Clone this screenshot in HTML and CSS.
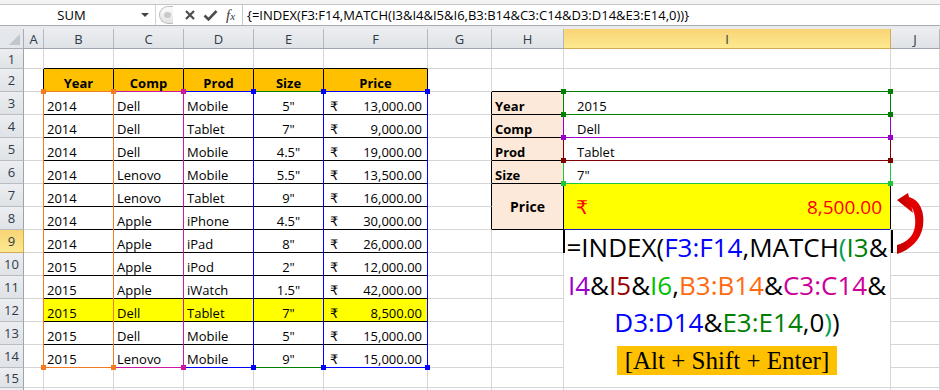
FILE: index.html
```html
<html>
  <head>
    <link rel="stylesheet" href="styles.css">
  </head>
  <body>
    <div class="top">
      <div class="fbar">
        <div class="namebox"><span class="name">SUM</span><span class="caret"></span></div>
        <div class="btns">
          <span class="grip"><span class="dot"></span></span>
          <svg class="ico-x" width="12" height="12" viewBox="0 0 12 12"><path d="M2 2 L10 10 M10 2 L2 10" stroke="#4d4d4d" stroke-width="2.2" fill="none"/></svg>
          <svg class="ico-ok" width="15" height="13" viewBox="0 0 15 13"><path d="M1.5 6.5 L5.5 10.5 L13.5 2" stroke="#4d4d4d" stroke-width="2.6" fill="none"/></svg>
          <span class="fx">f<small>x</small></span>
        </div>
        <div class="finput">{=INDEX(F3:F14,MATCH(I3&amp;I4&amp;I5&amp;I6,B3:B14&amp;C3:C14&amp;D3:D14&amp;E3:E14,0))}</div>
      </div>
      <div class="strip"></div>
    </div>

    <div class="sheet">
      <div class="grid">
        <!-- column headers -->
        <div class="corner"></div>
        <div class="ch">A</div><div class="ch">B</div><div class="ch">C</div><div class="ch">D</div><div class="ch">E</div>
        <div class="ch">F</div><div class="ch">G</div><div class="ch">H</div><div class="ch sel">I</div><div class="ch">J</div>

        <!-- row 1 -->
        <div class="rh">1</div><div class="c"></div>
        <div class="c eb"></div><div class="c eb"></div><div class="c eb"></div><div class="c eb"></div><div class="c eb"></div>
        <div class="c"></div><div class="c"></div><div class="c"></div><div class="c"></div>

        <!-- row 2 -->
        <div class="rh">2</div><div class="c er"></div>
        <div class="c hd">Year</div><div class="c hd">Comp</div><div class="c hd">Prod</div><div class="c hd">Size</div><div class="c hd">Price</div>
        <div class="c"></div><div class="c eb"></div><div class="c"></div><div class="c"></div>

        <!-- row 3 -->
        <div class="rh">3</div><div class="c"></div>
        <div class="c t">2014</div><div class="c t">Dell</div><div class="c t">Mobile</div><div class="c t ctr">5"</div>
        <div class="c t money"><span>₹</span><span>13,000.00</span></div>
        <div class="c er"></div><div class="c lab">Year</div><div class="c val">2015</div><div class="c"></div>

        <!-- row 4 -->
        <div class="rh">4</div><div class="c"></div>
        <div class="c t">2014</div><div class="c t">Dell</div><div class="c t">Tablet</div><div class="c t ctr">7"</div>
        <div class="c t money"><span>₹</span><span>9,000.00</span></div>
        <div class="c er"></div><div class="c lab">Comp</div><div class="c val">Dell</div><div class="c"></div>

        <!-- row 5 -->
        <div class="rh">5</div><div class="c"></div>
        <div class="c t">2014</div><div class="c t">Dell</div><div class="c t">Mobile</div><div class="c t ctr">4.5"</div>
        <div class="c t money"><span>₹</span><span>19,000.00</span></div>
        <div class="c er"></div><div class="c lab">Prod</div><div class="c val">Tablet</div><div class="c"></div>

        <!-- row 6 -->
        <div class="rh">6</div><div class="c"></div>
        <div class="c t">2014</div><div class="c t">Lenovo</div><div class="c t">Mobile</div><div class="c t ctr">5.5"</div>
        <div class="c t money"><span>₹</span><span>13,500.00</span></div>
        <div class="c er"></div><div class="c lab">Size</div><div class="c val">7"</div><div class="c"></div>

        <!-- row 7 -->
        <div class="rh">7</div><div class="c"></div>
        <div class="c t">2014</div><div class="c t">Lenovo</div><div class="c t">Tablet</div><div class="c t ctr">9"</div>
        <div class="c t money"><span>₹</span><span>16,000.00</span></div>
        <div class="c er"></div><div class="c lab price">Price</div>
        <div class="c big"><span>₹</span><span>8,500.00</span></div><div class="c"></div>

        <!-- row 8 -->
        <div class="rh">8</div><div class="c"></div>
        <div class="c t">2014</div><div class="c t">Apple</div><div class="c t">iPhone</div><div class="c t ctr">4.5"</div>
        <div class="c t money"><span>₹</span><span>30,000.00</span></div>
        <div class="c er"></div><div class="c"></div>

        <!-- row 9 -->
        <div class="rh sel">9</div><div class="c"></div>
        <div class="c t">2014</div><div class="c t">Apple</div><div class="c t">iPad</div><div class="c t ctr">8"</div>
        <div class="c t money"><span>₹</span><span>26,000.00</span></div>
        <div class="c"></div><div class="c"></div>
        <div class="c merge">
          <div class="fline"><span class="k">=INDEX(</span><span class="f">F3:F14</span>,MATCH<span class="g2">(</span><span class="g">I3</span>&amp;</div>
          <div class="fline"><span class="p">I4</span>&amp;<span class="m">I5</span>&amp;<span class="lg">I6</span>,<span class="o">B3:B14</span>&amp;<span class="mg">C3:C14</span>&amp;</div>
          <div class="fline"><span class="f">D3:D14</span>&amp;<span class="g">E3:E14</span>,0<span class="g2">)</span>)</div>
          <div class="keys">[Alt + Shift + Enter]</div>
        </div>
        <div class="c"></div>

        <!-- row 10 -->
        <div class="rh">10</div><div class="c"></div>
        <div class="c t">2015</div><div class="c t">Apple</div><div class="c t">iPod</div><div class="c t ctr">2"</div>
        <div class="c t money"><span>₹</span><span>12,000.00</span></div>
        <div class="c"></div><div class="c"></div><div class="c"></div>

        <!-- row 11 -->
        <div class="rh">11</div><div class="c"></div>
        <div class="c t">2015</div><div class="c t">Apple</div><div class="c t">iWatch</div><div class="c t ctr">1.5"</div>
        <div class="c t money"><span>₹</span><span>42,000.00</span></div>
        <div class="c"></div><div class="c"></div><div class="c"></div>

        <!-- row 12 -->
        <div class="rh">12</div><div class="c"></div>
        <div class="c t yl">2015</div><div class="c t yl">Dell</div><div class="c t yl">Tablet</div><div class="c t yl ctr">7"</div>
        <div class="c t yl money"><span>₹</span><span>8,500.00</span></div>
        <div class="c"></div><div class="c"></div><div class="c"></div>

        <!-- row 13 -->
        <div class="rh">13</div><div class="c"></div>
        <div class="c t">2015</div><div class="c t">Dell</div><div class="c t">Mobile</div><div class="c t ctr">5"</div>
        <div class="c t money"><span>₹</span><span>15,000.00</span></div>
        <div class="c"></div><div class="c"></div><div class="c"></div>

        <!-- row 14 -->
        <div class="rh">14</div><div class="c"></div>
        <div class="c t">2015</div><div class="c t">Lenovo</div><div class="c t">Mobile</div><div class="c t ctr">9"</div>
        <div class="c t money"><span>₹</span><span>15,000.00</span></div>
        <div class="c"></div><div class="c"></div><div class="c"></div>

        <!-- row 15 -->
        <div class="rh">15</div><div class="c"></div>
        <div class="c"></div><div class="c"></div><div class="c"></div><div class="c"></div><div class="c"></div>
        <div class="c"></div><div class="c"></div><div class="c"></div>

        <!-- row 16, only its top edge shows -->
        <div class="rh"></div><div class="c"></div>
        <div class="c"></div><div class="c"></div><div class="c"></div><div class="c"></div><div class="c"></div>
        <div class="c"></div><div class="c"></div><div class="c"></div><div class="c"></div>
      </div>

      <!-- formula range highlights, drawn over the cells -->
      <div class="grid overlay">
        <div class="box green col-e"><i class="tl"></i><i class="tr"></i><i class="bl"></i><i class="br"></i></div>
        <div class="box blue col-f"><i class="tl"></i><i class="tr"></i><i class="bl"></i><i class="br"></i></div>
        <div class="box blue col-d"><i class="tl"></i><i class="tr"></i><i class="bl"></i><i class="br"></i></div>
        <div class="box magenta col-c"><i class="tl"></i><i class="tr"></i><i class="bl"></i><i class="br"></i></div>
        <div class="box orange col-b"><i class="tl"></i><i class="tr"></i><i class="bl"></i><i class="br"></i></div>

        <div class="box lime cell-i6"><i class="tl"></i><i class="tr"></i><i class="bl"></i><i class="br"></i></div>
        <div class="box maroon cell-i5"><i class="tl"></i><i class="tr"></i><i class="bl"></i><i class="br"></i></div>
        <div class="box purple cell-i4"><i class="tl"></i><i class="tr"></i><i class="bl"></i><i class="br"></i></div>
        <div class="box green cell-i3"><i class="tl"></i><i class="tr"></i><i class="bl"></i><i class="br"></i></div>

        <div class="active"></div>

        <div class="arrow">
          <svg width="40" height="70" viewBox="0 0 40 70">
            <defs>
              <linearGradient id="red" x1="0" y1="0" x2="1" y2="0">
                <stop offset="0" stop-color="#b80000"/>
                <stop offset="0.6" stop-color="#e80000"/>
                <stop offset="1" stop-color="#d00000"/>
              </linearGradient>
            </defs>
            <path d="M7 10 L18 3 L19 7 C30 10 35 22 33 36 C31 50 20 60 7 64 L7 55 C16 53 24 46 25 36 C26 28 24 21 21.5 17 L23 23 Z" fill="url(#red)"/>
          </svg>
        </div>
      </div>
    </div>
  </body>
</html>
```

FILE: styles.css
```css
* {
  box-sizing: border-box;
}
body {
  margin: 0;
  width: 940px;
  height: 390px;
  overflow: hidden;
  background: #fff;
  font-family: "Open Sans", "DejaVu Sans", sans-serif;
  font-size: 13px;
  color: #000;
}

/* formula bar */
.top {
  background: #f3f3f3;
  padding-top: 4px;
}
.fbar {
  display: flex;
  height: 22px;
  background: #fff;
  border-top: 1px solid #c5c5c5;
  border-bottom: 1px solid #a9adb3;
}
.namebox {
  width: 156px;
  display: flex;
  align-items: center;
  border-right: 1px solid #d2d2d2;
}
.name {
  flex: 1;
  text-align: center;
  padding-left: 2px;
}
.caret {
  width: 0;
  height: 0;
  border-left: 4px solid transparent;
  border-right: 4px solid transparent;
  border-top: 4px solid #444;
  margin-right: 6px;
}
.btns {
  width: 86px;
  display: flex;
  align-items: center;
  padding-left: 3px;
}
.grip {
  position: relative;
  width: 14px;
  height: 18px;
  border: 1px solid #bdbdbd;
  border-right: none;
  border-radius: 9px 0 0 9px;
  background: linear-gradient(#fbfbfb, #e2e2e2);
}
.dot {
  position: absolute;
  left: 4px;
  top: 5px;
  width: 7px;
  height: 6px;
  border-radius: 50%;
  background: #c9c9c9;
}
.ico-x {
  margin-left: 11px;
}
.ico-ok {
  margin-left: 7px;
}
.fx {
  margin-left: 8px;
  font-family: "Liberation Serif", serif;
  font-style: italic;
  font-size: 15px;
  color: #3a3a3a;
}
.fx small {
  font-size: 11px;
}
.finput {
  flex: 1;
  border-left: 1px solid #c8c8c8;
  padding-left: 4px;
  line-height: 20px;
  font-size: 13px;
  white-space: nowrap;
}
.strip {
  height: 3px;
  background: #e8eaed;
}

/* sheet grid */
.sheet {
  position: relative;
}
.grid {
  display: grid;
  grid-template-columns: 24px 20px 70px 70px 70px 70px 104px 64px 72px 327px 49px;
  grid-template-rows: 20px 20px repeat(13, 23px) 20px 20px;
}
.overlay {
  position: absolute;
  left: 0;
  top: 0;
  right: 0;
  pointer-events: none;
}

.corner {
  position: relative;
  background: #e4e7eb;
  border-right: 1px solid #a9adb3;
  border-bottom: 1px solid #a9adb3;
}
.corner::after {
  content: "";
  position: absolute;
  right: 3px;
  bottom: 3px;
  border-left: 11px solid transparent;
  border-bottom: 11px solid #c2c7cd;
}
.ch,
.rh {
  display: flex;
  align-items: center;
  justify-content: center;
  background: linear-gradient(#eceef1, #dfe2e6);
  color: #2f3a48;
}
.ch {
  border-right: 1px solid #b3b8bf;
  border-bottom: 1px solid #9ea4ac;
}
.rh {
  border-right: 1px solid #9ea4ac;
  border-bottom: 1px solid #b8bdc4;
}
.ch.sel,
.rh.sel {
  background: linear-gradient(#f8d475, #fde990);
  border-color: #d2aa55;
}

.c {
  display: flex;
  align-items: flex-end;
  padding: 0 3px;
  line-height: 16px;
  white-space: nowrap;
  border-right: 1px solid #d6d6d6;
  border-bottom: 1px solid #d6d6d6;
}
.eb {
  border-bottom-color: #000;
}
.er {
  border-right-color: #000;
}

/* data table */
.hd {
  justify-content: center;
  background: #ffc000;
  font-weight: 700;
  border-right-color: #000;
  border-bottom-color: #000;
}
.t {
  border-bottom-color: #000;
}
.ctr {
  justify-content: center;
}
.money {
  justify-content: space-between;
  padding: 0 5px 0 6px;
}
.yl {
  background: #ffff00;
}

/* lookup block */
.lab {
  background: #fde9d9;
  font-weight: 700;
  border-right-color: #000;
  border-bottom-color: #000;
}
.val {
  padding-left: 13px;
}
.price {
  grid-row: span 2;
  align-items: center;
  justify-content: center;
  font-size: 14px;
}
.big {
  grid-row: span 2;
  align-items: center;
  justify-content: space-between;
  padding: 0 8px 0 12px;
  background: #ffff00;
  color: #ff0000;
  font-size: 19px;
  line-height: 24px;
  border-right-color: #000;
  border-bottom-color: #1a1ab8;
}
.merge {
  grid-row: span 7;
  flex-direction: column;
  align-items: center;
  justify-content: flex-start;
  margin-top: -1px;
  font-size: 26px;
  line-height: 37.5px;
}
.fline {
  white-space: nowrap;
}
.k { color: #000; }
.f { color: #0000ff; }
.g { color: #008000; }
.g2 { color: #00a050; }
.p { color: #9900cc; }
.m { color: #990000; }
.lg { color: #00c000; }
.o { color: #ff6a10; }
.mg { color: #cc0099; }
.keys {
  margin-top: 4px;
  padding: 0 8px;
  background: #ffc000;
  font-family: "Liberation Serif", serif;
  font-size: 25px;
  line-height: 29px;
}

/* range highlight boxes */
.box {
  position: relative;
  margin: -1px 0 0 -1px;
  border: 1px solid;
}
.box i {
  position: absolute;
  width: 5px;
  height: 5px;
  background: currentColor;
}
.box .tl { left: -3px; top: -3px; }
.box .tr { right: -3px; top: -3px; }
.box .bl { left: -3px; bottom: -3px; }
.box .br { right: -3px; bottom: -3px; }

.orange { color: #f47b20; }
.magenta { color: #cc1aa0; }
.blue { color: #0000ff; }
.green { color: #008000; }
.purple { color: #9900cc; }
.maroon { color: #800000; }
.lime { color: #1fc53a; }

.col-b { grid-column: 3; grid-row: 4 / 16; }
.col-c { grid-column: 4; grid-row: 4 / 16; }
.col-d { grid-column: 5; grid-row: 4 / 16; }
.col-e { grid-column: 6; grid-row: 4 / 16; }
.col-f { grid-column: 7; grid-row: 4 / 16; }
.cell-i3 { grid-column: 10; grid-row: 4; }
.cell-i4 { grid-column: 10; grid-row: 5; }
.cell-i5 { grid-column: 10; grid-row: 6; }
.cell-i6 { grid-column: 10; grid-row: 7; }

.active {
  grid-column: 10;
  grid-row: 10;
  margin: 0 -2px 0 -1px;
  border-left: 2px solid #000;
  border-right: 2px solid #000;
}
.arrow {
  grid-column: 11;
  grid-row: 8 / span 3;
  margin: 6px 0 0 -1px;
}
```
